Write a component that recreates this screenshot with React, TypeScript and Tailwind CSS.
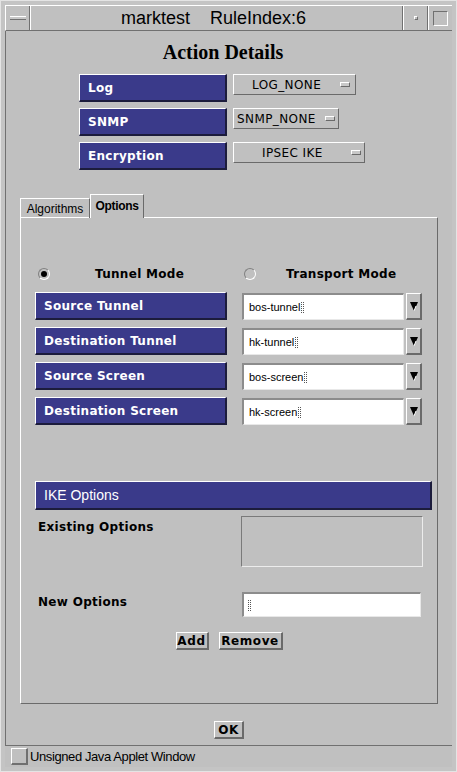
import { ReactNode } from 'react'

const sans = "font-['DejaVu_Sans',sans-serif]"

const BlueLabel = ({ text, w }: { text: string; w: string }) => (
  <div
    className={`${w} flex h-[28px] items-center border-t border-l border-white border-r-2 border-b-2 border-r-[#1c1c3c] border-b-[#1c1c3c] bg-[#3a3a8a] pl-[8px] text-[12px] font-bold tracking-[0.3px] text-white ${sans}`}
  >
    {text}
  </div>
)

const Choice = ({ text, w, textPad, gap }: { text: string; w: string; textPad: string; gap: string }) => (
  <div
    className={`${w} flex h-[21px] items-center border-t border-l border-white border-r border-b border-r-[#6a6a6a] border-b-[#6a6a6a] ${textPad} text-[12px] tracking-[0.4px] text-black ${sans}`}
  >
    <span>{text}</span>
    <span className={`${gap} h-[5px] w-[10px] border-t border-l border-white border-r border-b border-r-[#6a6a6a] border-b-[#6a6a6a] bg-[#c8c8c8]`} />
  </div>
)

const Cursor = () => (
  <span className="ml-[1px] inline-block h-[11px] w-[3px] border-x border-dotted border-[#555]" />
)

const Radio = ({ on }: { on: boolean }) => (
  <span className="flex h-[12px] w-[12px] items-center justify-center rounded-full border border-t-[#808080] border-l-[#808080] border-r-white border-b-white">
    {on && <span className="h-[6px] w-[6px] rounded-full bg-black" />}
  </span>
)

const Arrow = () => (
  <div className="flex h-[27px] w-[16px] items-center justify-center border-t border-l border-white border-r-2 border-b-2 border-r-[#6a6a6a] border-b-[#6a6a6a]">
    <svg width="8" height="10" viewBox="0 0 8 10">
      <path d="M0 1 L8 1 L4 10 Z" fill="#000" />
      <path d="M4 10 L6 5" stroke="#fff" strokeWidth="1" />
    </svg>
  </div>
)

const TunnelRow = ({ label, value }: { label: string; value: string }) => (
  <div className="flex items-start">
    <BlueLabel text={label} w="w-[192px]" />
    <div className="ml-[15px] mt-[1px] flex h-[27px] w-[162px] items-center border-t-2 border-l-2 border-t-[#8c8c8c] border-l-[#8c8c8c] border-b border-r border-b-[#e8e8e8] border-r-[#e8e8e8] bg-white pl-[5px] font-['Liberation_Sans',sans-serif] text-[11px] text-black">
      {value}
      <Cursor />
    </div>
    <div className="ml-[2px] mt-[1px]">
      <Arrow />
    </div>
  </div>
)

const Btn = ({ children, w }: { children: ReactNode; w: string }) => (
  <div
    className={`${w} flex h-[18px] items-center justify-center border-t border-l border-white border-r-2 border-b-2 border-r-[#6a6a6a] border-b-[#6a6a6a] text-[12px] font-bold tracking-[0.6px] text-black ${sans}`}
  >
    {children}
  </div>
)

export default function App() {
  return (
    <div className="flex h-[772px] w-[457px] flex-col border border-[#e4e4e4] bg-[#c4c4c4] p-[4px]">
      {/* title bar */}
      <div className="flex h-[26px] border-t border-l border-white border-b border-b-[#707070] bg-[#c0c0c0]">
        <div className="flex w-[24px] items-center justify-center border-r border-[#707070]">
          <span className="h-[4px] w-[16px] border-t border-white border-b border-b-[#707070] bg-[#c8c8c8]" />
        </div>
        <div className="flex flex-1 items-center justify-center border-l border-white border-r border-r-[#707070] pr-[6px] font-['Liberation_Sans',sans-serif] text-[18px] text-black">
          <span>marktest</span>
          <span className="ml-[20px]">RuleIndex:6</span>
        </div>
        <div className="flex w-[25px] items-center justify-center border-l border-white border-r border-r-[#707070]">
          <span className="h-[4px] w-[4px] border-t border-l border-white border-r border-b border-r-[#707070] border-b-[#707070]" />
        </div>
        <div className="flex w-[24px] items-center justify-center border-l border-white">
          <span className="h-[15px] w-[15px] border-t border-l border-[#707070] border-r border-b border-r-white border-b-white" />
        </div>
      </div>

      {/* content */}
      <div className="flex flex-1 flex-col border-l border-[#707070] bg-[#c0c0c0]">
        <div className="mt-[9px] h-[24px] pr-[12px] text-center font-['Liberation_Serif',serif] text-[20px] font-bold leading-[24px] text-black">
          Action Details
        </div>

        <div className="mt-[10px] flex flex-col gap-[6px] pl-[73px]">
          <div className="flex items-start gap-[6px]">
            <BlueLabel text="Log" w="w-[148px]" />
            <Choice text="LOG_NONE" w="w-[123px]" textPad="pl-[18px]" gap="ml-[19px]" />
          </div>
          <div className="flex items-start gap-[6px]">
            <BlueLabel text="SNMP" w="w-[148px]" />
            <Choice text="SNMP_NONE" w="w-[106px]" textPad="pl-[3px]" gap="ml-[9px]" />
          </div>
          <div className="flex items-start gap-[6px]">
            <BlueLabel text="Encryption" w="w-[148px]" />
            <Choice text="IPSEC IKE" w="w-[132px]" textPad="pl-[28px]" gap="ml-[28px]" />
          </div>
        </div>

        {/* tabs */}
        <div className="relative z-10 -mb-[1px] mt-[24px] flex items-end pl-[14px]">
          <div className="flex h-[20px] w-[70px] items-center justify-center border-t border-l border-white border-r border-r-[#6a6a6a] font-['Liberation_Sans',sans-serif] text-[12px] text-black">
            Algorithms
          </div>
          <div className="flex h-[24px] w-[54px] items-center justify-center border-t border-l border-white border-r border-r-[#6a6a6a] bg-[#c0c0c0] pb-[2px] font-['Liberation_Sans',sans-serif] text-[12px] font-bold tracking-[-0.3px] text-black">
            Options
          </div>
        </div>

        <div className="ml-[14px] flex h-[487px] w-[418px] flex-col border-t border-l border-white border-r border-b border-r-[#6a6a6a] border-b-[#6a6a6a] pl-[14px] pt-[48px]">
          <div className={`flex h-[16px] items-center text-[12px] font-bold tracking-[0.3px] text-black ${sans}`}>
            <div className="flex w-[207px] items-center pl-[3px]">
              <Radio on />
              <span className="ml-[45px]">Tunnel Mode</span>
            </div>
            <div className="flex items-center pl-[2px]">
              <Radio on={false} />
              <span className="ml-[30px]">Transport Mode</span>
            </div>
          </div>

          <div className="mt-[10px] flex flex-col gap-[7px]">
            <TunnelRow label="Source Tunnel" value="bos-tunnel" />
            <TunnelRow label="Destination Tunnel" value="hk-tunnel" />
            <TunnelRow label="Source Screen" value="bos-screen" />
            <TunnelRow label="Destination Screen" value="hk-screen" />
          </div>

          <div className="mt-[56px] flex h-[29px] w-[397px] items-center border-t border-l border-white border-r-2 border-b-2 border-r-[#1c1c3c] border-b-[#1c1c3c] bg-[#3a3a8a] pl-[8px] font-['Liberation_Sans',sans-serif] text-[14px] text-white">
            IKE Options
          </div>

          <div className="mt-[6px] flex items-start">
            <div className={`w-[206px] pl-[3px] pt-[2px] text-[12px] font-bold tracking-[0.3px] text-black ${sans}`}>
              Existing Options
            </div>
            <div className="h-[51px] w-[182px] border-t border-l border-[#7a7a7a] border-r border-b border-r-[#ececec] border-b-[#ececec]" />
          </div>

          <div className="mt-[25px] flex items-start">
            <div className={`w-[207px] pl-[3px] pt-[1px] text-[12px] font-bold tracking-[0.3px] text-black ${sans}`}>
              New Options
            </div>
            <div className="flex h-[25px] w-[179px] items-center border-t-2 border-l-2 border-t-[#8c8c8c] border-l-[#8c8c8c] border-b border-r border-b-[#e8e8e8] border-r-[#e8e8e8] bg-white pl-[3px]">
              <Cursor />
            </div>
          </div>

          <div className="mt-[15px] flex justify-center gap-[10px] pr-[14px]">
            <Btn w="w-[33px]">Add</Btn>
            <Btn w="w-[64px]">Remove</Btn>
          </div>
        </div>

        <div className="mt-[17px] flex justify-center">
          <Btn w="w-[30px]">OK</Btn>
        </div>
      </div>

      {/* status bar */}
      <div className="flex h-[22px] items-center border-t border-[#707070] bg-[#c0c0c0] pl-[6px]">
        <span className="h-[17px] w-[17px] border-t border-l border-white border-r-2 border-b-2 border-r-[#707070] border-b-[#707070]" />
        <span className="ml-[2px] font-['Liberation_Sans',sans-serif] text-[13px] tracking-[-0.4px] text-black">
          Unsigned Java Applet Window
        </span>
      </div>
    </div>
  )
}
